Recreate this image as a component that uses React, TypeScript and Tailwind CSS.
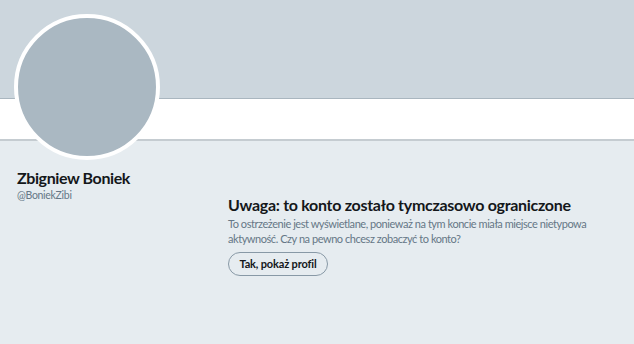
export default function App() {
  return (
    <div className="w-[634px] h-[344px] bg-[#e6ecf0] overflow-hidden relative" style={{ fontFamily: 'Lato, "Liberation Sans", Arial, sans-serif' }}>
      <div className="h-[99px] bg-[#ccd6dd] border-b border-[#a9b6bf]" />
      <div className="h-[42px] bg-white border-b-2 border-[#c5ccd1]" />
      <div className="absolute left-[14px] top-[14px] w-[146px] h-[146px] rounded-full bg-[#aab8c2] border-4 border-white" />
      <div className="flex pl-[17px] pt-[27px]">
        <div className="w-[211px] flex flex-col">
          <div className="text-[16px] font-bold text-[#14171a] leading-[20px] tracking-[-0.4px]">Zbigniew Boniek</div>
          <div className="text-[10.5px] text-[#657786] leading-[14px] tracking-[-0.3px]">@BoniekZibi</div>
        </div>
        <div className="flex flex-col pt-[27px]">
          <div className="text-[16px] font-bold text-[#14171a] leading-[20px] tracking-[-0.3px] whitespace-nowrap">Uwaga: to konto zostało tymczasowo ograniczone</div>
          <div className="mt-[1px] text-[11px] text-[#657786] leading-[15px] tracking-[-0.45px] whitespace-nowrap">
            To ostrzeżenie jest wyświetlane, ponieważ na tym koncie miała miejsce nietypowa
            <br />
            aktywność. Czy na pewno chcesz zobaczyć to konto?
          </div>
          <div className="mt-[4px]">
            <button className="h-[24px] w-[100px] rounded-full border border-[#8899a6] text-[11px] font-bold text-[#14171a] bg-transparent tracking-[-0.15px]">Tak, pokaż profil</button>
          </div>
        </div>
      </div>
    </div>
  );
}
